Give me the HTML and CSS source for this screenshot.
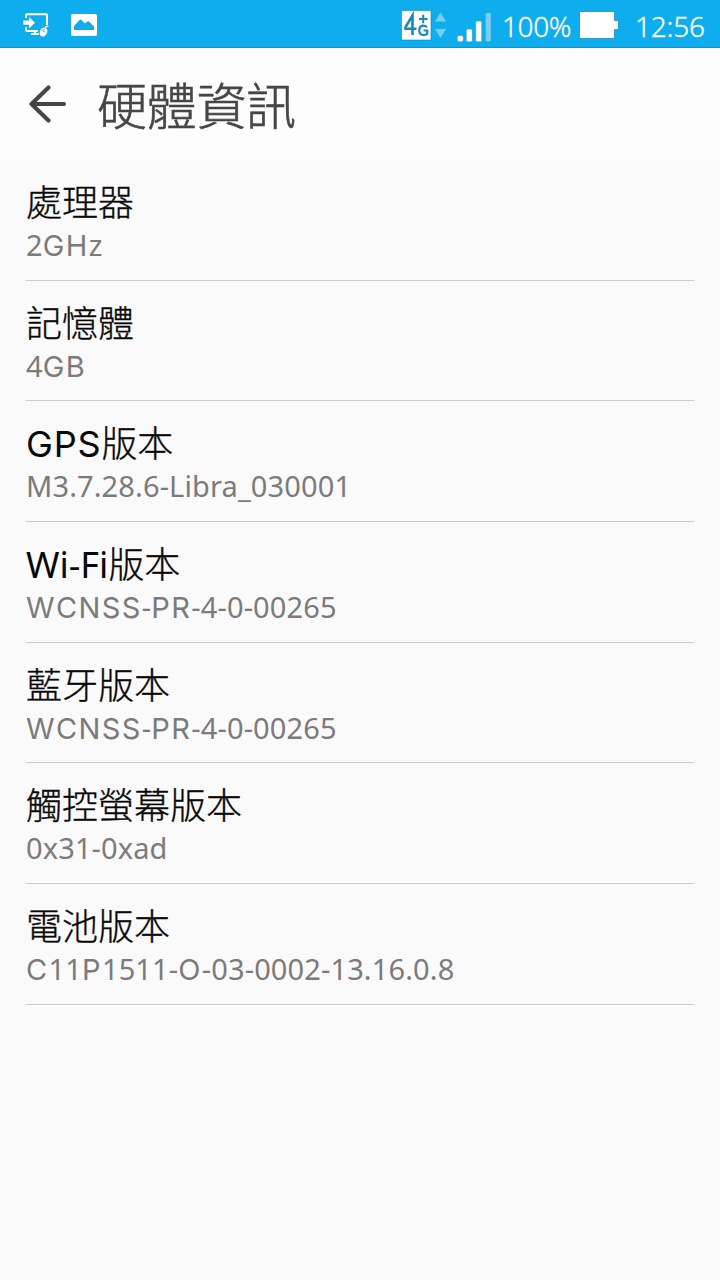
FILE: index.html
```html
<!DOCTYPE html>
<html lang="zh-Hant">
<head>
<meta charset="utf-8">
<title>硬體資訊</title>
<link rel="stylesheet" href="styles.css">
</head>
<body>
<div class="statusbar">
  <svg class="icon-share" width="28" height="26" viewBox="0 0 28 26" fill="none" stroke="#fff" stroke-width="2">
    <path d="M3 5V2.2Q3 1.2 4 1.2H23Q24 1.2 24 2.2V12M3 14V17Q3 18 4 18H15M12 18V21M8 21H16"/>
    <path d="M.3 7.5H6V4L12 9.7L6 15.500V11.700H.3Z" fill="#fff" stroke="none"/>
    <ellipse cx="20.500" cy="19" rx="3.600" ry="4.700" transform="rotate(28 20.500 19)" fill="#fff" stroke="none"/>
    <path d="M22.500 15Q23 12.500 25.500 13.500" stroke-width="1.200"/>
    <path d="M18.300 17.200L22.500 19M21.300 15.500L20.300 18" stroke="#0eaeee" stroke-width=".7"/>
  </svg>
  <svg class="icon-image" width="26" height="22" viewBox="0 0 26 22">
    <rect width="26" height="22" rx="1.500" fill="#fff"/>
    <path d="M3 16V12L8.500 6Q9.500 5 10.500 6L14 9.500L16.500 7.500Q17.500 7 18.500 8L23 12.500V16Z" fill="#0eaeee"/>
  </svg>
  <div class="network">
    <svg width="46" height="32" viewBox="0 0 46 32">
      <rect x=".5" y=".5" width="29.500" height="29.500" fill="#fff" stroke="#0986b8" stroke-width=".6"/>
      <g fill="none" stroke="#168bb9">
        <path d="M15.500 18.700H4.500V17L11.500 5.500V25" stroke-width="2.600"/>
        <path d="M18 9H26.500M22.200 4.700V13.200" stroke-width="2"/>
        <path d="M26 17.200Q24.500 15.700 22.500 15.700Q18.300 15.700 18.300 20.300Q18.300 25 22.500 25Q24.700 25 26.200 23.800V20.500H22.500" stroke-width="2.200"/>
      </g>
      <path d="M39.500 2.500L45 11.500H34ZM39.500 28L34 19H45Z" fill="#76d0f5"/>
    </svg>
  </div>
  <svg class="icon-signal" width="35" height="31" viewBox="0 0 35 31" stroke="#0986b8" stroke-width=".4">
    <rect x=".3" y="23.500" width="6" height="6.300" rx="1.800" fill="#fff"/>
    <rect x="9.300" y="17" width="6" height="12.800" rx="1.500" fill="#fff"/>
    <rect x="18.700" y="9" width="6" height="20.800" rx="1.500" fill="#fff"/>
    <rect x="28.200" y=".5" width="6" height="29.300" rx="1.500" fill="#76d0f5"/>
  </svg>
  <span class="percent">100%</span>
  <svg class="icon-battery" width="40" height="28" viewBox="0 0 40 28">
    <path d="M.5 .5H35.500V9.500H39.500V18.500H35.500V27.500H.5Z" fill="#fff" stroke="#0986b8" stroke-width=".7"/>
  </svg>
  <span class="clock">12:56</span>
</div>
<header class="header">
  <svg class="icon-back" width="38" height="38" viewBox="0 0 38 38" fill="none" stroke="#464646" stroke-width="4.200" stroke-linecap="round" stroke-linejoin="round">
    <path d="M19.500 2.500L2.500 19L19.500 35.500M3.500 19H35"/>
  </svg>
  <h1 class="title">硬體資訊</h1>
</header>
<main class="list">
  <section class="item"><h2 class="name">處理器</h2><p class="value">2<span class="caps">GH</span>z</p></section>
  <section class="item"><h2 class="name">記憶體</h2><p class="value">4<span class="caps">GB</span></p></section>
  <section class="item"><h2 class="name"><span class="caps">GPS</span>版本</h2><p class="value">M3.7.28.6-Libra_030001</p></section>
  <section class="item"><h2 class="name"><span class="latin">Wi-Fi</span>版本</h2><p class="value"><span class="caps">WCNSS</span>-<span class="caps">PR</span>-4-0-00265</p></section>
  <section class="item"><h2 class="name">藍牙版本</h2><p class="value"><span class="caps">WCNSS</span>-<span class="caps">PR</span>-4-0-00265</p></section>
  <section class="item"><h2 class="name">觸控螢幕版本</h2><p class="value">0x31-0xad</p></section>
  <section class="item"><h2 class="name">電池版本</h2><p class="value"><span class="caps">C</span>11<span class="caps">P</span>1511-<span class="caps">O</span>-03-0002-13.16.0.8</p></section>
</main>
</body>
</html>
```

FILE: styles.css
```css
* { box-sizing: border-box; }
body {
  margin: 0;
  height: 1280px;
  overflow: hidden;
  background: #fafafa;
  font-family: "Noto Sans", "Noto Sans CJK TC", sans-serif;
}
svg { display: block; flex: none; }
.statusbar {
  height: 48px;
  display: flex;
  align-items: flex-start;
  background: #0eaeee;
  border-bottom: 1px solid #0b96d2;
  color: #fff;
  font-size: 28px;
  font-weight: 300;
  line-height: 38px;
  white-space: nowrap;
  -webkit-text-stroke: 0.3px #fff;
}
.icon-share { margin: 13px 0 0 23px; }
.icon-image { margin: 14px 0 0 20px; }
.network { margin: 10px 0 0 304px; }
.icon-signal { margin: 12px 0 0 10px; }
.percent { margin: 7px 0 0 10px; width: 69px; letter-spacing: -0.4px; }
.icon-battery { margin: 11px 0 0 8px; }
.clock { margin: 7px 0 0 16px; letter-spacing: -0.2px; }
.header {
  height: 112px;
  display: flex;
  align-items: center;
  padding-left: 29px;
  background: #fdfdfd;
}
.title {
  margin: 4px 0 0 30px;
  color: #464646;
  font-size: 50px;
  font-weight: 300;
  line-height: 72px;
  letter-spacing: -0.3px;
  -webkit-text-stroke: 0.6px #464646;
}
.item {
  height: 120.67px;
  margin: 0 26px;
  padding-top: 19px;
  border-bottom: 1px solid #cbcbcb;
}
.name {
  margin: 0;
  color: #080808;
  font-size: 36px;
  font-weight: 300;
  line-height: 48px;
  white-space: nowrap;
  -webkit-text-stroke: 0.35px #080808;
}
.value {
  margin: -2px 0 0;
  color: #7b7b7b;
  font-size: 29px;
  font-weight: 400;
  line-height: 40px;
  letter-spacing: 0.12px;
  white-space: nowrap;
}
.caps {
  font-family: Inter, "Noto Sans", sans-serif;
  font-weight: 400;
  line-height: 1;
  letter-spacing: 1.4px;
  -webkit-text-stroke: 0;
}
.name .caps { letter-spacing: 0.8px; }
.latin {
  font-weight: 400;
  -webkit-text-stroke: 0;
}
```
